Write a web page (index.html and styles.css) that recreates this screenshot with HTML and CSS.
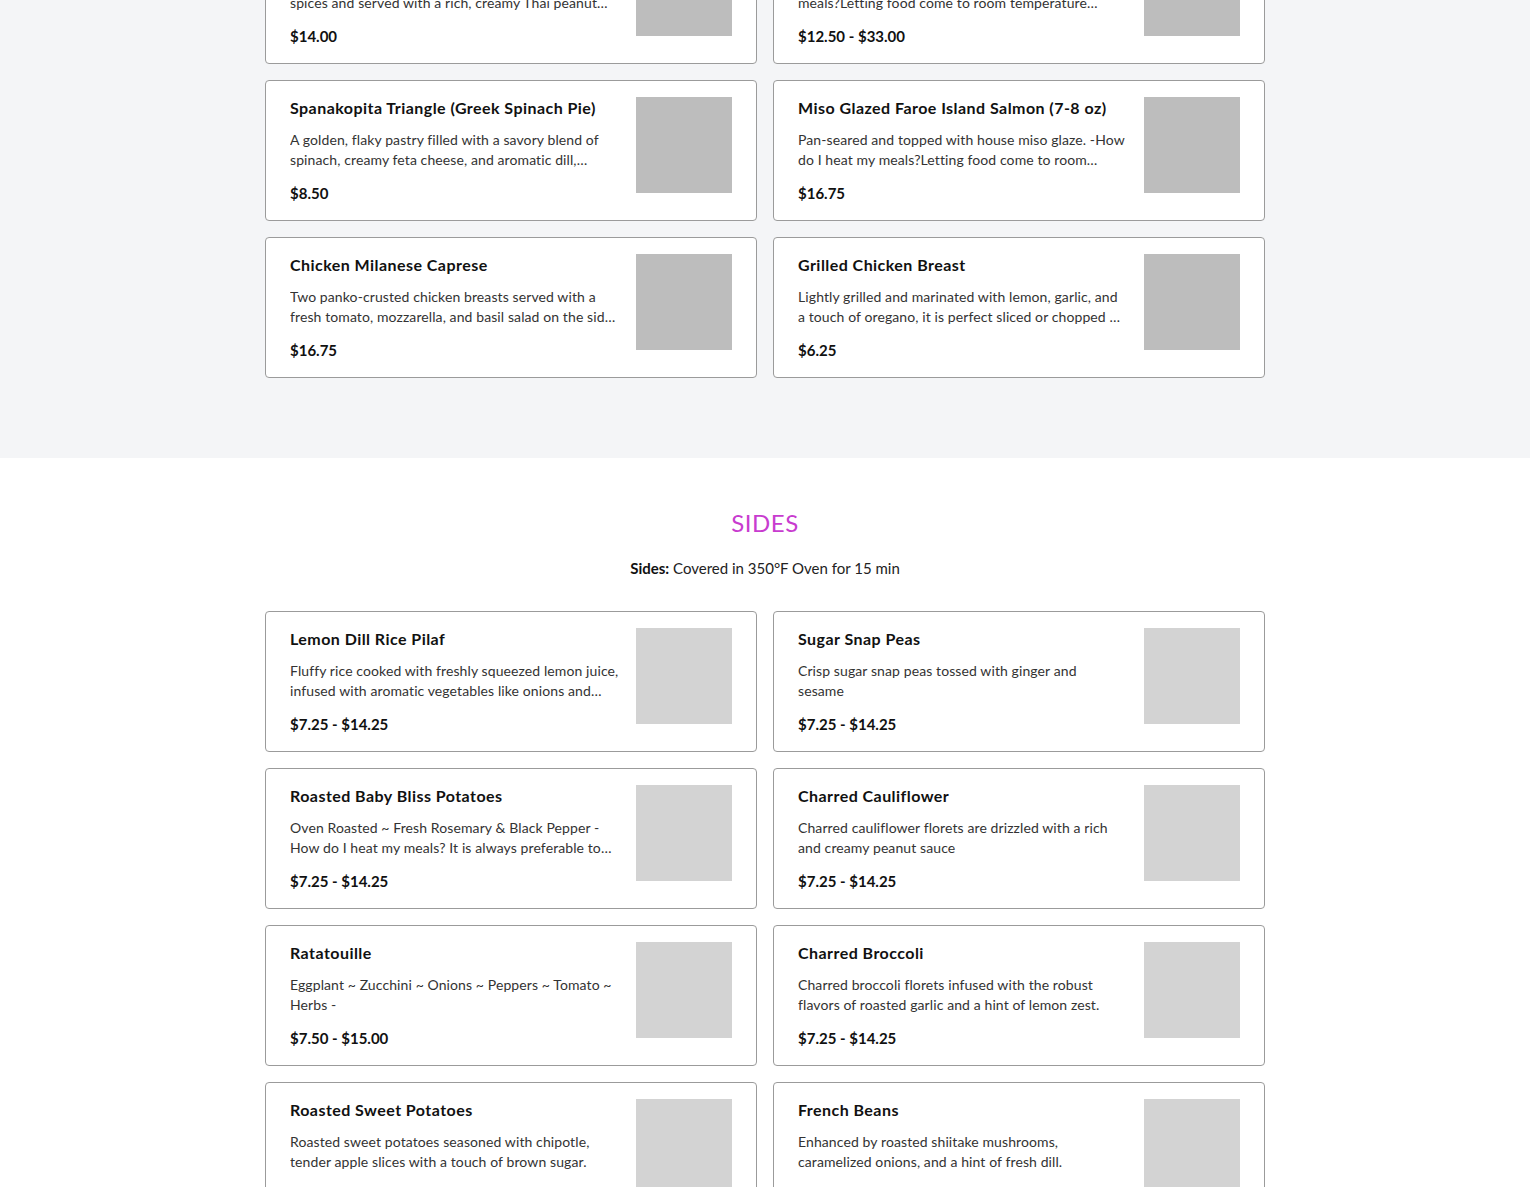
FILE: index.html
```html
<!DOCTYPE html>
<html lang="en">
<head>
    <meta charset="UTF-8">
    <meta name="viewport" content="width=device-width, initial-scale=1.0">
    <title>Menu</title>
    <link rel="stylesheet" href="styles.css">
</head>
<body>
    <section class="menu-section menu-section-gray">
        <div class="container">
            <div class="item-grid item-grid-scrolled">
                <div class="item-card">
                    <div class="item-info">
                        <div class="item-name">Thai Peanut Chicken</div>
                        <div class="item-desc">Grilled chicken skewers marinated in lemongrass and spices and served with a rich, creamy Thai peanut sauce and jasmine rice.</div>
                        <div class="item-price">$14.00</div>
                    </div>
                    <div class="item-img"></div>
                </div>
                <div class="item-card">
                    <div class="item-info">
                        <div class="item-name">Braised Beef Short Ribs</div>
                        <div class="item-desc">Braised in red wine and herbs. -How do I heat my meals?Letting food come to room temperature before reheating is always best.</div>
                        <div class="item-price">$12.50 - $33.00</div>
                    </div>
                    <div class="item-img"></div>
                </div>
                <div class="item-card">
                    <div class="item-info">
                        <div class="item-name">Spanakopita Triangle (Greek Spinach Pie)</div>
                        <div class="item-desc">A golden, flaky pastry filled with a savory blend of spinach, creamy feta cheese, and aromatic dill,…</div>
                        <div class="item-price">$8.50</div>
                    </div>
                    <div class="item-img"></div>
                </div>
                <div class="item-card">
                    <div class="item-info">
                        <div class="item-name">Miso Glazed Faroe Island Salmon (7-8 oz)</div>
                        <div class="item-desc">Pan-seared and topped with house miso glaze. -How do I heat my meals?Letting food come to room temperature before reheating.</div>
                        <div class="item-price">$16.75</div>
                    </div>
                    <div class="item-img"></div>
                </div>
                <div class="item-card">
                    <div class="item-info">
                        <div class="item-name">Chicken Milanese Caprese</div>
                        <div class="item-desc">Two panko-crusted chicken breasts served with a fresh tomato, mozzarella, and basil salad on the side with balsamic.</div>
                        <div class="item-price">$16.75</div>
                    </div>
                    <div class="item-img"></div>
                </div>
                <div class="item-card">
                    <div class="item-info">
                        <div class="item-name">Grilled Chicken Breast</div>
                        <div class="item-desc">Lightly grilled and marinated with lemon, garlic, and a touch of oregano, it is perfect sliced or chopped …</div>
                        <div class="item-price">$6.25</div>
                    </div>
                    <div class="item-img"></div>
                </div>
            </div>
        </div>
    </section>

    <section class="menu-section">
        <div class="container">
            <h2 class="section-title">SIDES</h2>
            <p class="section-note"><strong>Sides:</strong> Covered in 350°F Oven for 15 min</p>

            <div class="item-grid">
                <div class="item-card">
                    <div class="item-info">
                        <div class="item-name">Lemon Dill Rice Pilaf</div>
                        <div class="item-desc">Fluffy rice cooked with freshly squeezed lemon juice, infused with aromatic vegetables like onions and garlic, finished with fresh dill.</div>
                        <div class="item-price">$7.25 - $14.25</div>
                    </div>
                    <div class="item-img item-img-light"></div>
                </div>
                <div class="item-card">
                    <div class="item-info">
                        <div class="item-name">Sugar Snap Peas</div>
                        <div class="item-desc">Crisp sugar snap peas tossed with ginger and<br>sesame</div>
                        <div class="item-price">$7.25 - $14.25</div>
                    </div>
                    <div class="item-img item-img-light"></div>
                </div>
                <div class="item-card">
                    <div class="item-info">
                        <div class="item-name">Roasted Baby Bliss Potatoes</div>
                        <div class="item-desc">Oven Roasted ~ Fresh Rosemary &amp; Black Pepper - How do I heat my meals? It is always preferable to let food come to room temperature.</div>
                        <div class="item-price">$7.25 - $14.25</div>
                    </div>
                    <div class="item-img item-img-light"></div>
                </div>
                <div class="item-card">
                    <div class="item-info">
                        <div class="item-name">Charred Cauliflower</div>
                        <div class="item-desc">Charred cauliflower florets are drizzled with a rich and creamy peanut sauce</div>
                        <div class="item-price">$7.25 - $14.25</div>
                    </div>
                    <div class="item-img item-img-light"></div>
                </div>
                <div class="item-card">
                    <div class="item-info">
                        <div class="item-name">Ratatouille</div>
                        <div class="item-desc">Eggplant ~ Zucchini ~ Onions ~ Peppers ~ Tomato ~ Herbs -</div>
                        <div class="item-price">$7.50 - $15.00</div>
                    </div>
                    <div class="item-img item-img-light"></div>
                </div>
                <div class="item-card">
                    <div class="item-info">
                        <div class="item-name">Charred Broccoli</div>
                        <div class="item-desc">Charred broccoli florets infused with the robust flavors of roasted garlic and a hint of lemon zest.</div>
                        <div class="item-price">$7.25 - $14.25</div>
                    </div>
                    <div class="item-img item-img-light"></div>
                </div>
                <div class="item-card">
                    <div class="item-info">
                        <div class="item-name">Roasted Sweet Potatoes</div>
                        <div class="item-desc">Roasted sweet potatoes seasoned with chipotle, tender apple slices with a touch of brown sugar.</div>
                        <div class="item-price">$7.25 - $14.25</div>
                    </div>
                    <div class="item-img item-img-light"></div>
                </div>
                <div class="item-card">
                    <div class="item-info">
                        <div class="item-name">French Beans</div>
                        <div class="item-desc">Enhanced by roasted shiitake mushrooms, caramelized onions, and a hint of fresh dill.</div>
                        <div class="item-price">$7.25 - $14.25</div>
                    </div>
                    <div class="item-img item-img-light"></div>
                </div>
            </div>
        </div>
    </section>
</body>
</html>
```

FILE: styles.css
```css
body {
    font-family: Lato, 'Noto Sans', sans-serif;
    margin: 0;
    background-color: #fff;
    color: #111;
}

.container {
    width: 1000px;
    margin: 0 auto;
}

.menu-section {
    padding: 49px 0 80px;
}

.menu-section-gray {
    background: #f4f5f7;
    padding-top: 0;
}

.section-title {
    margin: 0;
    text-align: center;
    font-size: 24px;
    font-weight: 400;
    line-height: 32px;
    letter-spacing: 0.5px;
    color: #c83ccf;
}

.section-note {
    margin: 18px 0 32px;
    text-align: center;
    font-size: 15px;
    line-height: 22px;
    color: #222;
}

.section-note strong {
    font-weight: 700;
    color: #111;
}

.item-grid {
    display: grid;
    grid-template-columns: 1fr 1fr;
    gap: 16px;
}

/* page is scrolled: first row sits partly above the viewport */
.item-grid-scrolled {
    margin-top: -77px;
}

.item-card {
    display: flex;
    gap: 16px;
    padding: 16px 24px;
    background: #fff;
    border: 1px solid #9b9b9b;
    border-radius: 4px;
}

.item-info {
    flex: 1;
    min-width: 0;
}

.item-name {
    font-size: 16px;
    font-weight: 700;
    line-height: 22px;
    letter-spacing: 0.45px;
    color: #111;
}

.item-desc {
    margin-top: 11px;
    font-size: 14px;
    line-height: 20px;
    letter-spacing: 0.1px;
    color: #333;
    display: -webkit-box;
    -webkit-line-clamp: 2;
    -webkit-box-orient: vertical;
    overflow: hidden;
}

.item-price {
    margin-top: 12px;
    font-size: 15px;
    font-weight: 700;
    line-height: 22px;
    color: #111;
}

.item-img {
    flex: none;
    width: 96px;
    height: 96px;
    background: #bdbdbd;
}

.item-img-light {
    background: #d3d3d3;
}
```
